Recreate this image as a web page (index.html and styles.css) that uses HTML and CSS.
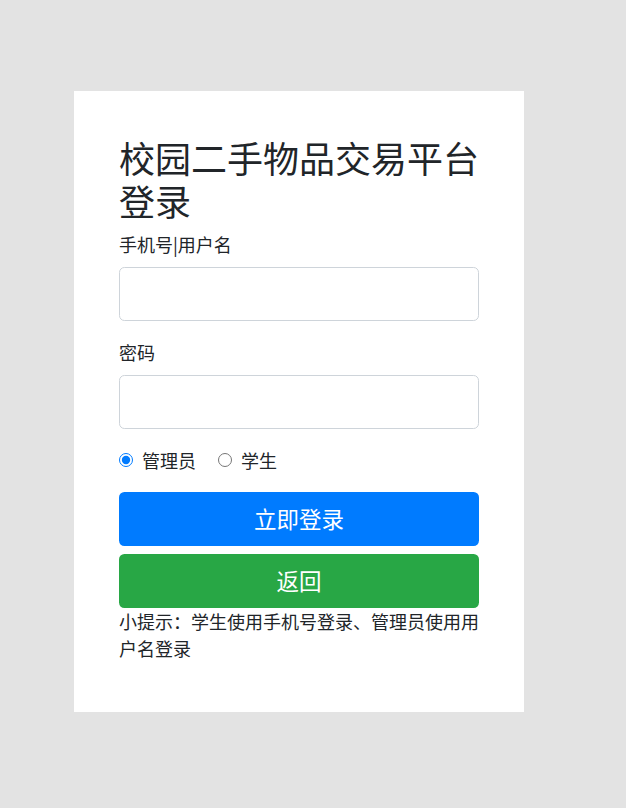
FILE: index.html
```html
<!DOCTYPE html>
<html lang="zh-CN">
<head>
<meta charset="utf-8">
<title>登录</title>
<link rel="stylesheet" href="styles.css">
</head>
<body>
<div class="card">
  <h2 class="title">校园二手物品交易平台登录</h2>
  <div class="form-group">
    <label class="label">手机号|用户名</label>
    <input class="input" type="text">
  </div>
  <div class="form-group">
    <label class="label">密码</label>
    <input class="input" type="password">
  </div>
  <div class="radios">
    <label class="radio-item"><input type="radio" name="role" checked><span>管理员</span></label>
    <label class="radio-item"><input type="radio" name="role"><span>学生</span></label>
  </div>
  <button class="btn btn-primary">立即登录</button>
  <button class="btn btn-success">返回</button>
  <p class="hint">小提示：学生使用手机号登录、管理员使用用户名登录</p>
</div>
</body>
</html>
```

FILE: styles.css
```css
html, body {
  margin: 0;
  padding: 0;
}
body {
  background: #e3e3e3;
  font-family: "Noto Sans CJK SC", "Noto Sans", sans-serif;
  font-size: 18px;
  line-height: 1.5;
  color: #212529;
  min-height: 808px;
}
.card {
  box-sizing: border-box;
  width: 450px;
  height: 621px;
  margin: 91px 0 0 74px;
  padding: 45px;
  background: #fff;
  display: flex;
  flex-direction: column;
}
.title {
  margin: 0 0 9px;
  font-size: 36px;
  font-weight: 400;
  line-height: 1.2;
}
.form-group {
  display: flex;
  flex-direction: column;
  margin-bottom: 18px;
}
.label {
  margin-bottom: 9px;
}
.input {
  box-sizing: border-box;
  height: 53.75px;
  width: 100%;
  border: 1px solid #ced4da;
  border-radius: 5.4px;
  font-size: 22.5px;
  padding: 9px 18px;
  background: #fff;
  margin: 0;
}
.radios {
  display: flex;
  align-items: center;
  margin-bottom: 18px;
  height: 27px;
}
.radio-item {
  display: flex;
  align-items: center;
  margin-right: 22px;
}
.radio-item input {
  width: 14px;
  height: 14px;
  margin: 0 9px 0 0;
  accent-color: #007bff;
}
.btn {
  box-sizing: border-box;
  display: block;
  width: 100%;
  height: 53.75px;
  border: 1px solid transparent;
  border-radius: 5.4px;
  font-family: inherit;
  font-size: 22.5px;
  line-height: 1.5;
  color: #fff;
  padding: 0;
  margin: 0;
}
.btn-primary {
  background: #007bff;
}
.btn-success {
  background: #28a745;
  margin-top: 8.5px;
}
.hint {
  margin: 0;
}
```
